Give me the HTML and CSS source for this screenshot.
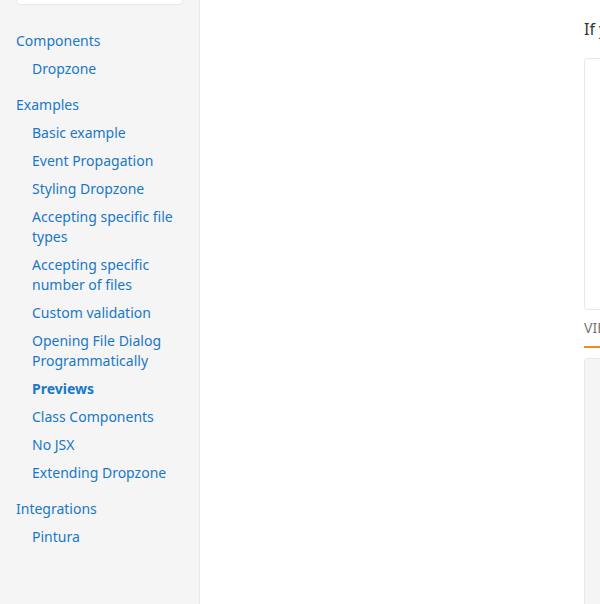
FILE: index.html
```html
<!DOCTYPE html>
<html lang="en">
<head>
<meta charset="utf-8">
<title>Previews</title>
<link rel="stylesheet" href="styles.css">
</head>
<body>
<div class="layout">
  <aside class="sidebar">
    <div class="search"></div>
    <nav class="nav">
      <ul class="sections">
        <li class="section">
          <a class="heading">Components</a>
          <ul class="items">
            <li><a>Dropzone</a></li>
          </ul>
        </li>
        <li class="section">
          <a class="heading">Examples</a>
          <ul class="items">
            <li><a>Basic example</a></li>
            <li><a>Event Propagation</a></li>
            <li><a>Styling Dropzone</a></li>
            <li><a>Accepting specific file types</a></li>
            <li><a>Accepting specific number of files</a></li>
            <li><a>Custom validation</a></li>
            <li><a>Opening File Dialog Programmatically</a></li>
            <li><a class="active">Previews</a></li>
            <li><a>Class Components</a></li>
            <li><a>No JSX</a></li>
            <li><a>Extending Dropzone</a></li>
          </ul>
        </li>
        <li class="section">
          <a class="heading">Integrations</a>
          <ul class="items">
            <li><a>Pintura</a></li>
          </ul>
        </li>
      </ul>
    </nav>
  </aside>
  <main class="main">
    <p class="para">If you</p>
    <div class="preview"></div>
    <div class="tabs"><span class="tab">VIEW CODE</span></div>
    <div class="code"></div>
  </main>
</div>
</body>
</html>
```

FILE: styles.css
```css
* { box-sizing: border-box; }
html, body { margin: 0; padding: 0; background: #fff; }
body {
  font-family: "Noto Sans", "Open Sans", sans-serif;
  color: #333;
  overflow: hidden;
}
.layout {
  display: flex;
  height: 604px;
}
.sidebar {
  width: 200px;
  flex: none;
  background: #f5f5f5;
  border-right: 1px solid #e8e8e8;
  padding: 0 16px;
  overflow: hidden;
}
.search {
  height: 34px;
  margin-top: -29px;
  background: #fff;
  border: 1px solid #e8e8e8;
  border-radius: 4px;
}
.nav { padding-top: 26px; }
.sections, .items {
  list-style: none;
  margin: 0;
  padding: 0;
}
.section { padding-bottom: 8px; }
.items { padding-left: 16px; }
.heading, .items a {
  display: block;
  font-size: 14px;
  line-height: 20px;
  color: #1978c8;
  margin-bottom: 8px;
}
.items a.active { font-weight: bold; }
.main {
  flex: 1;
  padding-left: 384px;
  overflow: hidden;
  white-space: nowrap;
  font-family: "Noto Sans", "Open Sans", sans-serif;
}
.para {
  margin: 19px 0 0;
  font-size: 16px;
  line-height: 20px;
  color: #333;
}
.preview {
  margin-top: 19px;
  height: 252px;
  width: 200px;
  border: 1px solid #e8e8e8;
  border-radius: 3px;
}
.tabs {
  margin-top: 6px;
  display: flex;
}
.tab {
  display: block;
  font-size: 14px;
  line-height: 24px;
  padding-bottom: 6px;
  color: #767676;
  border-bottom: 2px solid #f28a25;
}
.code {
  margin-top: 10px;
  height: 260px;
  width: 200px;
  background: #f5f5f5;
  border: 1px solid #e8e8e8;
  border-radius: 3px;
}
```
